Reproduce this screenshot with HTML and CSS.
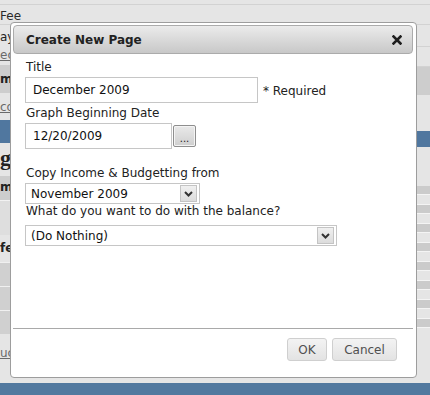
FILE: index.html
```html
<!DOCTYPE html>
<html>
<head>
	<meta charset="utf-8">
	<title>Create New Page</title>
	<link rel="stylesheet" href="styles.css">
</head>
<body>
	<div id="page">
		<div class="page-top"></div>
		<div class="page-fee">Fee</div>
		<div class="page-columns">
			<div class="side side-left">
				<div class="cell cell-plain">ay</div>
				<div class="cell cell-link"><a href="#">ec</a></div>
				<div class="cell cell-head">m</div>
				<div class="cell cell-link cell-tall"><a href="#">co</a></div>
				<div class="cell cell-blue"></div>
				<div class="cell cell-title">g</div>
				<div class="cell cell-head cell-short">me</div>
				<div class="cell cell-blank"></div>
				<div class="cell cell-bold">fe</div>
				<div class="cell cell-grey"></div>
				<div class="cell cell-grey"></div>
				<div class="cell cell-grey"></div>
				<div class="cell cell-gap"></div>
				<div class="cell cell-link"><a href="#">uc</a></div>
			</div>
			<div class="side side-main"></div>
			<div class="side side-right">
				<div class="cell r-line"></div>
				<div class="cell r-line r-short"></div>
				<div class="cell cell-head"></div>
				<div class="cell r-space"></div>
				<div class="cell r-blue"></div>
				<div class="cell r-space r-mid"></div>
				<div class="r-grid">
					<div class="r-row r-dark"></div>
					<div class="r-row"></div>
					<div class="r-row r-dark"></div>
					<div class="r-row"></div>
					<div class="r-row r-dark"></div>
					<div class="r-row"></div>
					<div class="r-row r-dark"></div>
					<div class="r-row"></div>
					<div class="r-row r-dark"></div>
					<div class="r-row"></div>
					<div class="r-row r-dark"></div>
					<div class="r-row"></div>
					<div class="r-row r-dark"></div>
					<div class="r-row"></div>
					<div class="r-row r-dark"></div>
				</div>
			</div>
		</div>
		<div class="page-bar"></div>
	</div>

	<div id="dialog">
		<div class="dialog-title">
			<span>Create New Page</span>
			<a class="dialog-close" href="#" title="Close">
				<svg width="10" height="10" viewBox="0 0 10 10">
					<path d="M1.5 1.5 L8.5 8.5 M8.5 1.5 L1.5 8.5" stroke="#1e1e1e" stroke-width="2.6" stroke-linecap="square"/>
				</svg>
			</a>
		</div>

		<div class="dialog-body">
			<label class="field-label" for="pageTitle">Title</label>
			<div class="field-row">
				<input type="text" id="pageTitle" class="text-input title-input" value="December 2009">
				<span class="required">* Required</span>
			</div>

			<label class="field-label" for="graphDate">Graph Beginning Date</label>
			<div class="field-row">
				<input type="text" id="graphDate" class="text-input date-input" value="12/20/2009">
				<button class="date-button" type="button">...</button>
			</div>

			<label class="field-label label-copy" for="copyFrom">Copy Income &amp; Budgetting from</label>
			<div class="select select-copy">
				<select id="copyFrom">
					<option>November 2009</option>
				</select>
				<span class="select-arrow">
					<svg width="9" height="6" viewBox="0 0 9 6">
						<path d="M1 1 L4.5 4.5 L8 1" fill="none" stroke="#333" stroke-width="2"/>
					</svg>
				</span>
			</div>

			<label class="field-label label-balance" for="balance">What do you want to do with the balance?</label>
			<div class="select select-balance">
				<select id="balance">
					<option>(Do Nothing)</option>
				</select>
				<span class="select-arrow">
					<svg width="9" height="6" viewBox="0 0 9 6">
						<path d="M1 1 L4.5 4.5 L8 1" fill="none" stroke="#333" stroke-width="2"/>
					</svg>
				</span>
			</div>
		</div>

		<div class="dialog-buttons">
			<button class="dialog-button button-ok" type="button">OK</button>
			<button class="dialog-button button-cancel" type="button">Cancel</button>
		</div>
	</div>
</body>
</html>
```

FILE: styles.css
```css
* {
	box-sizing: border-box;
}
body {
	margin: 0;
	width: 430px;
	height: 395px;
	overflow: hidden;
	position: relative;
	background-color: #e5e5e5;
	font-family: "DejaVu Sans", Verdana, sans-serif;
	font-size: 12px;
	color: #222;
}

/* page behind the dialog */
#page {
	height: 395px;
	display: flex;
	flex-direction: column;
}
.page-top {
	height: 5px;
	border-bottom: 1px solid #d2d2d2;
}
.page-fee {
	height: 20px;
	padding-top: 4px;
	line-height: 15px;
	color: #2a2a2a;
	border-bottom: 1px solid #d2d2d2;
}
.page-columns {
	flex: 1;
	display: flex;
	overflow: hidden;
}
.side {
	display: flex;
	flex-direction: column;
	white-space: nowrap;
}
.side-left {
	width: 40px;
}
.side-main {
	flex: 1;
}
.side-right {
	width: 13px;
	overflow: hidden;
}
.cell {
	line-height: 15px;
}
.cell-plain {
	height: 22px;
	padding-top: 5px;
}
.cell-link {
	height: 18px;
	padding-top: 1px;
}
.cell-link a {
	color: #6a6a6a;
}
.cell-tall {
	height: 27px;
	padding-top: 7px;
}
.cell-head {
	height: 28px;
	padding-top: 7px;
	background-color: #cdcdcd;
	font-weight: bold;
}
.cell-short {
	height: 24px;
	padding-top: 4px;
}
.cell-blue {
	height: 23px;
	background-color: #50779f;
}
.cell-title {
	height: 33px;
	padding-top: 7px;
	font-family: "Liberation Serif", serif;
	font-size: 22px;
	font-weight: bold;
}
.cell-blank {
	height: 35px;
	background-color: #dedede;
	border-top: 1px solid #f2f2f2;
}
.cell-bold {
	height: 27px;
	padding-top: 6px;
	font-weight: bold;
}
.cell-grey {
	height: 24px;
	background-color: #d0d0d0;
	border-top: 1px solid #f0f0f0;
}
.cell-gap {
	height: 11px;
}

.r-line {
	height: 22px;
	border-bottom: 1px solid #d2d2d2;
}
.r-short {
	height: 20px;
}
.r-space {
	height: 36px;
}
.r-blue {
	height: 16px;
	background-color: #50779f;
}
.r-mid {
	height: 39px;
}
.r-grid {
	display: flex;
	flex-direction: column;
}
.r-row {
	height: 10px;
	border-bottom: 1px solid #f4f4f4;
}
.r-dark {
	height: 9px;
	background-color: #cbcbcb;
}

.page-bar {
	height: 12px;
	background-color: #52799f;
}

/* dialog */
#dialog {
	position: absolute;
	left: 10px;
	top: 22px;
	width: 407px;
	height: 356px;
	padding: 2px 3px 2px 2px;
	display: flex;
	flex-direction: column;
	background-color: #fff;
	border: 1px solid #9d9d9d;
	border-radius: 4px;
}
.dialog-title {
	height: 29px;
	flex-shrink: 0;
	display: flex;
	align-items: center;
	justify-content: space-between;
	padding: 1px 10px 0 12px;
	border: 1px solid #ababab;
	border-radius: 4px;
	background: linear-gradient(#ebebeb, #c8c8c8);
	font-weight: bold;
	color: #222;
}
.dialog-close {
	display: flex;
}
.dialog-body {
	flex: 1;
	padding: 6px 12px 0 12px;
	display: flex;
	flex-direction: column;
	align-items: flex-start;
}
.field-label {
	line-height: 15px;
	padding-left: 1px;
}
.field-row {
	display: flex;
	align-items: center;
	margin-top: 2px;
	margin-bottom: 3px;
}
.text-input {
	height: 26px;
	padding: 0 7px;
	border: 1px solid #c6c6c6;
	border-radius: 0;
	font-family: inherit;
	font-size: 12px;
	color: #111;
	outline: none;
}
.title-input {
	width: 233px;
}
.required {
	margin-left: 5px;
	padding-top: 1px;
}
.date-input {
	width: 147px;
}
.date-button {
	width: 23px;
	height: 22px;
	margin-left: 1px;
	padding: 0 0 3px;
	display: flex;
	align-items: flex-end;
	justify-content: center;
	border: 1px solid #8e8e8e;
	border-radius: 2px;
	background: linear-gradient(#e9e9e9, #cfcfcf);
	box-shadow: inset 0 0 0 1px #f4f4f4;
	font-family: inherit;
	font-size: 10px;
	line-height: 8px;
	color: #222;
}
.label-copy {
	margin-top: 14px;
}
.select {
	height: 21px;
	margin-top: 2px;
	display: flex;
	align-items: center;
	border: 1px solid #c6c6c6;
	padding-right: 2px;
}
.select select {
	flex: 1;
	height: 19px;
	padding: 0 0 0 5px;
	border: none;
	appearance: none;
	background: transparent;
	font-family: inherit;
	font-size: 12px;
	color: #111;
	outline: none;
}
.select-copy {
	width: 175px;
}
.select-balance {
	width: 312px;
	margin-top: 6px;
}
.select-arrow {
	width: 17px;
	height: 17px;
	display: flex;
	align-items: center;
	justify-content: center;
	border: 1px solid #c4c4c4;
	background: linear-gradient(#f0f0f0, #dcdcdc);
}
.label-balance {
	margin-top: 0;
}
.dialog-buttons {
	height: 47px;
	flex-shrink: 0;
	display: flex;
	justify-content: flex-end;
	align-items: flex-start;
	gap: 5px;
	padding: 9px 16px 0 0;
	border-top: 1px solid #a9a9a9;
}
.dialog-button {
	height: 23px;
	padding: 0;
	border: 1px solid #cfcfcf;
	border-radius: 3px;
	background: linear-gradient(#f3f3f3, #e3e3e3);
	font-family: inherit;
	font-size: 12px;
	color: #505050;
}
.button-ok {
	width: 40px;
}
.button-cancel {
	width: 65px;
}
```
